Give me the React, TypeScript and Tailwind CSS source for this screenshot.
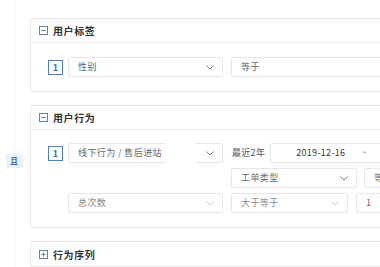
import React from "react";

const font = { fontFamily: '"Noto Sans CJK SC", "Noto Sans", sans-serif' };

function Chevron({ light }: { light?: boolean }) {
  return (
    <svg width="8" height="5" viewBox="0 0 8 5" className="shrink-0">
      <path d="M0.5 0.5 L4 4 L7.5 0.5" fill="none" stroke={light ? "#c4c4c4" : "#6b6b6b"} strokeWidth="0.9" />
    </svg>
  );
}

function ToggleIcon({ open }: { open: boolean }) {
  return (
    <svg width="9" height="9" viewBox="0 0 9 9" className="shrink-0">
      <rect x="0.5" y="0.5" width="8" height="8" fill="none" stroke="#5f84ab" strokeWidth="1" />
      <path d="M2.3 4.5 H6.7" stroke="#5f84ab" strokeWidth="1" />
      {!open && <path d="M4.5 2.3 V6.7" stroke="#5f84ab" strokeWidth="1" />}
    </svg>
  );
}

function Select({ text, w, light }: { text: string; w: string; light?: boolean }) {
  return (
    <div className={`${w} h-[20px] shrink-0 flex items-center justify-between pl-[9px] pr-[8px] border border-[#e6e6e6] rounded-[2px] bg-white`}>
      <span className={`whitespace-nowrap text-[9px] tracking-[0.4px] ${light ? "text-[#8a8a8a]" : "text-[#6a6a6a]"}`}>{text}</span>
      <Chevron light={light} />
    </div>
  );
}

function Input({ text, w }: { text: string; w: string }) {
  return (
    <div className={`${w} h-[20px] shrink-0 flex items-center pl-[9px] border border-[#e6e6e6] rounded-[2px] bg-white`}>
      <span className="whitespace-nowrap text-[9px] tracking-[0.4px] text-[#6a6a6a]">{text}</span>
    </div>
  );
}

function Badge() {
  return (
    <div className="w-[15px] h-[15px] shrink-0 flex items-center justify-center border border-[#4d80b8] text-[9px] font-bold text-[#3f73ad] leading-none">
      1
    </div>
  );
}

function Header({ title, open }: { title: string; open: boolean }) {
  return (
    <div className={`h-[24px] flex items-center gap-[5px] pl-[8px] ${open ? "border-b border-[#ececec]" : ""}`}>
      <ToggleIcon open={open} />
      <span className="whitespace-nowrap text-[10px] font-bold tracking-[0.6px] text-[#333]">{title}</span>
    </div>
  );
}

export default function App() {
  return (
    <div className="w-[380px] h-[267px] overflow-hidden bg-white flex" style={font}>
      {/* rail */}
      <div className="relative w-[30px] shrink-0 flex flex-col items-center">
        <div className="absolute left-[14px] top-0 bottom-0 w-px bg-[#f1f1f1]" />
        <div className="relative mt-[154px] ml-[-2px] w-[17px] h-[14px] flex items-center justify-center bg-[#edf2fa] text-[8px] font-bold text-[#3d6fb0]">
          且
        </div>
      </div>

      <div className="flex flex-col pt-[18px] gap-[13px]">
        {/* 用户标签 */}
        <div className="w-[400px] shrink-0 border border-[#e9e9e9] rounded-[2px]">
          <Header title="用户标签" open />
          <div className="pl-[17px] pt-[14px] pb-[14px]">
            <div className="flex items-center gap-[5px]">
              <Badge />
              <Select text="性别" w="w-[155px]" />
              <div className="ml-[3px]">
                <Input text="等于" w="w-[160px]" />
              </div>
            </div>
          </div>
        </div>

        {/* 用户行为 */}
        <div className="w-[400px] shrink-0 border border-[#e9e9e9] rounded-[2px]">
          <Header title="用户行为" open />
          <div className="pl-[17px] pt-[13px] pb-[14px] flex flex-col gap-[5px]">
            <div className="relative flex items-center gap-[5px]">
              <Badge />
              <Select text="线下行为 / 售后进站" w="w-[155px]" />
              <span className="ml-[4px] whitespace-nowrap text-[9px] tracking-[0.3px] text-[#555]">最近2年</span>
              <div className="w-[160px] h-[20px] shrink-0 flex items-center border border-[#e6e6e6] rounded-[2px]">
                <span className="ml-[25px] whitespace-nowrap text-[9px] tracking-[0.3px] text-[#333]">2019-12-16</span>
                <span className="ml-[16px] text-[9px] text-[#888]">~</span>
              </div>
              <div className="absolute left-[118px] top-[-8px] w-[29px] h-[32px] bg-white" />
            </div>
            <div className="flex items-center gap-[7px] pl-[183px]">
              <Select text="工单类型" w="w-[126px]" />
              <Input text="等于" w="w-[60px]" />
            </div>
            <div className="flex items-center pl-[20px]">
              <Select text="总次数" w="w-[155px]" light />
              <div className="ml-[8px]">
                <Select text="大于等于" w="w-[117px]" light />
              </div>
              <div className="ml-[8px]">
                <Input text="1" w="w-[60px]" />
              </div>
            </div>
          </div>
        </div>

        {/* 行为序列 */}
        <div className="w-[400px] shrink-0 border border-[#e9e9e9] rounded-[2px]">
          <Header title="行为序列" open={false} />
        </div>
      </div>
    </div>
  );
}
